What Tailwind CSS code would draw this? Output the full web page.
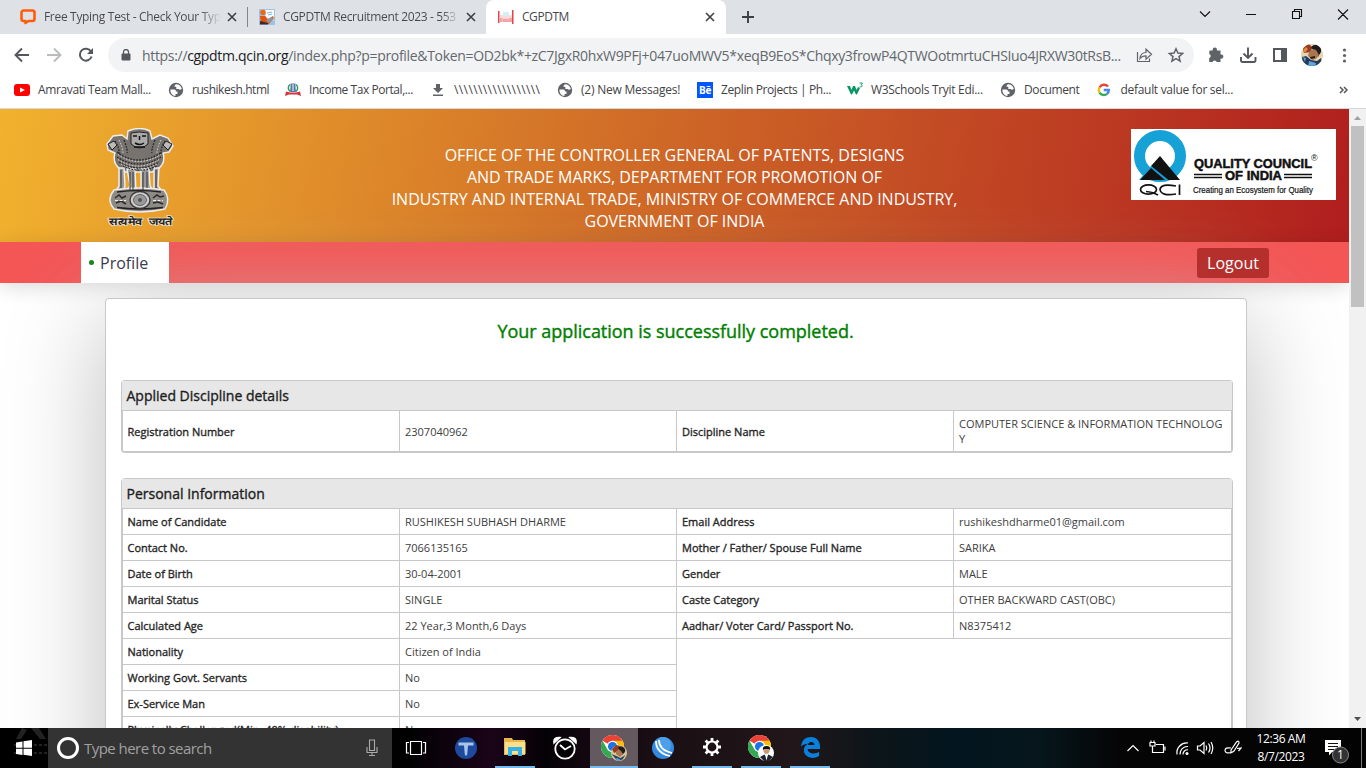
<!DOCTYPE html>
<html lang="en">
<head>
<meta charset="utf-8">
<title>CGPDTM</title>
<script src="https://cdn.jsdelivr.net/npm/@tailwindcss/browser@4"></script>
</head>
<body class="w-[1366px] h-[768px] overflow-hidden bg-white font-['Open_Sans',sans-serif]">
<svg class="hidden">
  <symbol id="x" viewBox="0 0 10 10"><path d="M1 1l8 8M9 1L1 9" stroke="#3c4043" stroke-width="1.6" fill="none"/></symbol>
  <symbol id="globe" viewBox="0 0 16 16"><circle cx="8" cy="8" r="7.200" fill="#5f6368"/><path d="M2.500 7.500h4c1.200 0 1.500 1.300 1.500 2h1.500v2.500H7.500v2C4.500 14 2 11 2.500 7.500zM8 2.200c3 0 5.200 2 5.800 4.600-.8 1.500-2.600 1.200-3.300.2H8.300V4.800H6.500c0-1.300.5-2 1.500-2.600z" fill="#fff"/></symbol>
  <symbol id="chrome" viewBox="0 0 24 24"><circle cx="12" cy="12" r="12" fill="#fff"/><path d="M12 12L1.600 6A12 12 0 0 1 22.400 6z" fill="#ea4335"/><path d="M12 12L22.400 6A12 12 0 0 1 12 24l5.200-9z" fill="#fbbc04"/><path d="M12 12l5.200 3L12 24A12 12 0 0 1 1.600 6l5.200 9z" fill="#34a853"/><path d="M12 6h10.400a12 12 0 0 1 1.200 3H12z" fill="#fbbc04"/><circle cx="12" cy="12" r="6" fill="#fff"/><circle cx="12" cy="12" r="4.700" fill="#1a73e8"/></symbol>
</svg>
<div class="flex flex-col w-full h-full">
  <!-- tab strip -->
  <div class="flex h-[34px] bg-[#dee1e6] text-[12px] leading-[34px] text-[#45484c] shrink-0">
    <div class="flex items-center w-[247px] pl-5">
      <svg class="w-4 h-4 shrink-0" viewBox="0 0 16 16"><path d="M3.500 1.500h9a2 2 0 0 1 2 2v6.500a2 2 0 0 1-2 2H8.500L5.500 14v-2h-2a2 2 0 0 1-2-2V3.500a2 2 0 0 1 2-2z" fill="none" stroke="#ff5c0a" stroke-width="2.600" stroke-linejoin="round"/></svg>
      <div class="ml-2 w-[177px] whitespace-nowrap tracking-[-0.32px] bg-gradient-to-r from-[#45484c] from-88% to-transparent bg-clip-text text-transparent">Free Typing Test - Check Your Typ</div>
      <svg class="w-[10px] h-[10px] ml-[6px]"><use href="#x"/></svg>
    </div>
    <div class="w-px h-5 mt-[7px] bg-[#80868b]"></div>
    <div class="flex items-center w-[238px] pl-[11px]">
      <svg class="w-4 h-4 shrink-0" viewBox="0 0 16 16"><rect width="16" height="16" fill="#9cc3e6"/><path d="M6 1h9v11H7z" fill="#fff"/><path d="M8 4l5-1M9 6l4-1" stroke="#7fb2dc"/><circle cx="4" cy="3.500" r="2.800" fill="#ed6a14"/><path d="M1 7h5l3 3 5-3 1 2-5 6H2z" fill="#e25312"/><path d="M7 11l6-3 2 3-6 3z" fill="#8a98a2"/><path d="M1 12l8 2v1.500H1z" fill="#3b2a22"/></svg>
      <div class="ml-2 w-[173px] whitespace-nowrap tracking-[-0.35px] bg-gradient-to-r from-[#45484c] from-92% to-[#45484c]/20 bg-clip-text text-transparent">CGPDTM Recruitment 2023 - 553</div>
      <svg class="w-[10px] h-[10px] ml-[10px]"><use href="#x"/></svg>
    </div>
    <div class="flex items-center w-[240px] rounded-t-[8px] bg-white pl-3">
      <svg class="w-4 h-4" viewBox="0 0 16 16"><path d="M0 2h1.500v12H0zM14 1h1.500v14H14z" fill="#e2444b"/><path d="M2 6h12v7H2z" fill="#fbdada"/><path d="M5 3h6v4H5z" fill="#d8eef6"/><path d="M1.500 9h3v4h-3zM11 9h3v4h-3zM5 10h6v3H5z" fill="#f4a5a5"/></svg>
      <div class="ml-2 grow tracking-[-0.45px]">CGPDTM</div>
      <svg class="w-[10px] h-[10px] mr-[11px]"><use href="#x"/></svg>
    </div>
    <svg class="w-3 h-3 mt-[11px] ml-4" viewBox="0 0 12 12"><path d="M6 0v12M0 6h12" stroke="#3c4043" stroke-width="1.900"/></svg>
    <svg class="w-[154px] h-[34px] ml-auto mr-4" viewBox="1196 0 154 34"><path d="M1200 11.500l5 5 5-5M1246 14.500h10M1292.500 11.500h7v7h-7zM1294.500 11.500v-2h7v7h-2M1338 9.500l10 10M1348 9.500l-10 10" fill="none" stroke="#111" stroke-width="1.100"/></svg>
  </div>
  <!-- toolbar -->
  <div class="flex items-center h-[42px] bg-white shrink-0">
    <svg class="w-[108px] h-[42px] shrink-0" viewBox="0 34 108 42"><path d="M29 55H16M22 48.500L15.500 55l6.500 6.500" fill="none" stroke="#54575b" stroke-width="1.900"/><path d="M47 55h13M54 48.500l6.500 6.500-6.500 6.500" fill="none" stroke="#b9bbbd" stroke-width="1.900"/><path d="M91 51.500a6 6 0 1 0 .6 5" fill="none" stroke="#54575b" stroke-width="2"/><path d="M93 48v6h-6z" fill="#54575b"/></svg>
    <div class="flex items-center w-[1086px] h-[34px] rounded-full bg-[#f1f3f4]">
      <svg class="w-[10px] h-3 ml-[13px]" viewBox="0 0 10 12"><rect x="0.500" y="4.500" width="9" height="7" rx="1" fill="#54575b"/><path d="M2.500 5V3a2.500 2.500 0 0 1 5 0v2" fill="none" stroke="#54575b" stroke-width="1.300"/></svg>
      <div class="ml-[11px] w-[984px] whitespace-nowrap text-[14px] text-[#64686d] tracking-[-0.32px]">https://<span class="text-[#202124]">cgpdtm.qcin.org</span>/index.php?p=profile&amp;Token=OD2bk*+zC7JgxR0hxW9PFj+047uoMWV5*xeqB9EoS*Chqxy3frowP4QTWOotmrtuCHSIuo4JRXW30tRsB...</div>
      <svg class="w-12 h-5 ml-[10px]" viewBox="1136 45 48 20"><path d="M1137.500 52v9.500h12v-3M1140 58.500c.5-4.500 3-6 6-6v-3.300l5.500 5-5.500 5v-3.400c-2.500 0-4.500.7-6 2.700z" fill="none" stroke="#5f6368" stroke-width="1.200"/><path d="M1176 48.800l1.900 4.300 4.700.4-3.600 3.100 1.100 4.600-4.100-2.500-4.100 2.500 1.100-4.600-3.600-3.100 4.700-.4z" fill="none" stroke="#5f6368" stroke-width="1.500"/></svg>
    </div>
    <svg class="w-[172px] h-[42px]" viewBox="1194 34 172 42">
      <path d="M1209.500 50.500h3.300a2.200 2.200 0 1 1 4 0h3.700v4a2.200 2.200 0 1 1 0 4.200v3.300h-3.800a2.200 2.200 0 0 0-4.200 0h-3.300v-3.900a2.200 2.200 0 0 0 0-4.200z" fill="#5f6368"/>
      <path d="M1241 57v3.500a1.500 1.500 0 0 0 1.500 1.500h11.500a1.500 1.500 0 0 0 1.500-1.500V57M1248 47.500v10M1243.500 53.500l4.500 4.500 4.500-4.500" fill="none" stroke="#54575b" stroke-width="1.900"/>
      <rect x="1274" y="49" width="12" height="12" fill="none" stroke="#54575b" stroke-width="2"/><path d="M1281 49h5v12h-5z" fill="#54575b"/>
      <clipPath id="av"><circle cx="1312" cy="55" r="11"/></clipPath><g clip-path="url(#av)"><path d="M1300 43h24v24h-24z" fill="#e6d6b0"/><path d="M1302 46l6-3 4 4-1 5-7 1z" fill="#963a20"/><path d="M1303 50l3-3 2 2-3 4z" fill="#e08a4a"/><path d="M1311 48q2-4 6-3 5 1 4 7l-3 5-3-6z" fill="#1e1b1e"/><path d="M1309 52q3-4 7-2l3 5-3 4-4 1-4-4z" fill="#a87650"/><path d="M1310 57l5-1v2l-4 1z" fill="#2a1a16"/><path d="M1302 57l4-1 5 4 6 1 4-3 2 9h-20z" fill="#263a58"/><path d="M1303 57l3 1-1 4zM1309 61l7 2-1 4h-7z" fill="#58a7df"/></g>
      <g fill="#5f6368"><circle cx="1344.500" cy="50" r="1.600"/><circle cx="1344.500" cy="55.500" r="1.600"/><circle cx="1344.500" cy="61" r="1.600"/></g>
    </svg>
  </div>
  <!-- bookmarks -->
  <div class="flex items-center h-[33px] pb-[5px] border-b border-[#d6d8da] text-[12px] text-[#3f4246] whitespace-nowrap shrink-0">
    <div class="flex items-center w-[154px] pl-[14px] gap-2 tracking-[-0.37px]"><svg class="w-4 h-3" viewBox="0 0 16 12"><rect width="16" height="12" rx="3" fill="#f00"/><path d="M6 3.500l5 2.500-5 2.500z" fill="#fff"/></svg>Amravati Team Mall...</div>
    <div class="flex items-center w-[117px] pl-[14px] gap-2 tracking-[-0.45px]"><svg class="w-4 h-4"><use href="#globe"/></svg>rushikesh.html</div>
    <div class="flex items-center w-[147px] pl-[14px] gap-2 tracking-[-0.44px]"><svg class="w-4 h-4" viewBox="0 0 16 16"><path d="M5 2.500a4.500 4.500 0 0 0 0 7M11 2.500a4.500 4.500 0 0 1 0 7" fill="none" stroke="#2a9d67" stroke-width="1.500"/><path d="M5.500 1.500h5V5l.5 5H5l.5-5z" fill="#5878a8"/><path d="M8 2v7" stroke="#dfe8f2" stroke-width="1.200"/><path d="M1 9.500l4 1h6l4-1 1 4.500-4-1.500H4L0 14z" fill="#d8323e"/></svg>Income Tax Portal,...</div>
    <div class="flex items-center w-[126px] pl-[13px] gap-2 tracking-[0.4px]"><svg class="w-[14px] h-4 mr-px" viewBox="0 0 14 16"><path d="M5 2h4v4h3l-5 5-5-5h3zM2 12.500h10v1.500H2z" fill="#5f6368"/></svg>\\\\\\\\\\\\\\\\\\</div>
    <div class="flex items-center w-[139px] pl-[13px] gap-2 tracking-[-0.22px]"><svg class="w-4 h-4"><use href="#globe"/></svg>(2) New Messages!</div>
    <div class="flex items-center w-[150px] pl-[14px] gap-2 tracking-[-0.4px]"><div class="w-4 h-4 bg-[#0057ff] text-white text-[10px] leading-[16px] font-bold text-center">Bē</div>Zeplin Projects | Ph...</div>
    <div class="flex items-center w-[153px] pl-[14px] gap-2 tracking-[-0.3px]"><svg class="w-4 h-4" viewBox="0 0 16 16"><path d="M0 4h3l1.500 4L6 4h2l1.500 4L11 5l2 1-3 6.500H9L7 8.500 5 12.500H4z" fill="#059862"/><path d="M12.500 1h3L14 2.800c2 0 1.500 2.700-1.500 2" fill="none" stroke="#059862" stroke-width=".9"/></svg>W3Schools Tryit Edi...</div>
    <div class="flex items-center w-[97px] pl-[14px] gap-2 tracking-[-0.38px]"><svg class="w-4 h-4"><use href="#globe"/></svg>Document</div>
    <div class="flex items-center w-[150px] pl-[14px] gap-[10px] tracking-[-0.3px]"><svg class="w-[14px] h-4" viewBox="0 0 16 16"><g fill="none" stroke-width="2.800"><path d="M13 4A6 6 0 0 0 3 5" stroke="#ea4335"/><path d="M3 5a6 6 0 0 0 0 6" stroke="#fbbc05"/><path d="M3 11a6 6 0 0 0 9 1.500" stroke="#34a853"/><path d="M12 12.500A6 6 0 0 0 14 8H8" stroke="#4285f4"/></g></svg>default value for sel...</div>
    <svg class="w-[9px] h-2 ml-auto mr-[18px]" viewBox="0 0 9 8"><path d="M1 1l3 3-3 3M5 1l3 3-3 3" fill="none" stroke="#54575b" stroke-width="1.500"/></svg>
  </div>
  <!-- web page -->
  <div class="flex h-[619px] shrink-0">
    <div class="w-[1349px] h-full overflow-hidden flex flex-col bg-white">
      <div class="flex justify-between h-[133px] shrink-0 pl-[105px] pr-[13px] bg-[linear-gradient(100deg,#f1b22e_0%,#d06c27_46%,#bf4223_75%,#b01e1e_100%)]">
        <svg class="w-[70px] h-[100px] mt-[19px]" viewBox="0 0 70 100">
          <g stroke="#eee" stroke-width="1.400" fill="#77736f">
            <path d="M23 3q12-5 22 0l2 8 8-4 8 3 5 8-4 6-6 1q3 10-5 16l-6 3H21l-6-3Q7 35 10 25L3 22 2 16l6-8 9-1 5 4z"/>
            <path d="M14 40h5l1 18-2 6h-8l4-6zM22 41h8l1 23h-9l3-7zM36 41h8l1 16 3 7H36zM49 40h5l-1 18 5 6h-9z" fill="#999"/>
            <path d="M9 62q26-4 50 0 7 9 1 19-26 6-51 0-8-9 0-19z" fill="#8e8a86"/>
          </g>
          <g stroke="#2a2a2a" stroke-width="1.300" stroke-dasharray="1.800 1.200" fill="none"><path d="M12 24q21 16 45 0M12 29q21 14 44 0M14 34q20 12 40 0M18 38q16 8 34 0M10 13q5 8 4 14M60 13q-5 8-4 14M19 12q4 10 3 13M50 12q-4 10-3 13"/></g>
          <g stroke="#e4e4e4" stroke-width="1" stroke-dasharray="1.500 1.500" fill="none"><path d="M13 26.500q20 14 43 0M13 31.500q20 13 41 0M16 36q18 10 36 0M14 12q4 8 4 13M56 12q-4 8-4 13"/></g>
          <path d="M26 5q8-2 17 0v11q-8 8-17 0z" fill="#aaa" stroke="#222"/><path d="M28 8h4M37 8h4M30 15q5 3 9 0M34.500 8v4M29 19l11 0" stroke="#111" stroke-width="1.500" fill="none"/>
          <path d="M3 16l6-3 3 4-5 5zM67 16l-6-3-3 4 5 5z" fill="#bbb" stroke="#222"/>
          <path d="M16 42v18M25 44v18M28 44v18M38 44v18M42 44v16M51 42v18" stroke="#333" stroke-width="1"/>
          <path d="M12 64q22-3 44 0M12 79.500q22 3 46 0" stroke="#222" stroke-width="1.500" fill="none"/>
          <ellipse cx="35" cy="72" rx="10" ry="8.500" fill="#ccc" stroke="#333" stroke-width="1.300"/><ellipse cx="35" cy="72" rx="6.500" ry="5.500" fill="#999" stroke="#666"/><circle cx="35" cy="72" r="2" fill="#555"/>
          <path d="M10 70l4-3 3 3 4-2M11 75l5-2 5 3M48 70l4-3 3 2 4-1M48 75l5-1 5 2" stroke="#2a2a2a" stroke-width="1.500" fill="none"/><path d="M10 72.500h11M48 72.500h10" stroke="#eee" stroke-width="1.200" stroke-dasharray="3 1.500"/>
          <g font-size="10" font-weight="600" fill="#222" stroke="#f3e6cf" stroke-width="1.500" paint-order="stroke"><text x="4" y="97" textLength="34" lengthAdjust="spacingAndGlyphs">सत्यमेव</text><text x="44" y="97" textLength="24" lengthAdjust="spacingAndGlyphs">जयते</text></g>
        </svg>
        <div class="relative z-10 w-[640px] ml-[43px] mt-[35px] text-center text-white text-[16px] leading-[22px] tracking-[-0.02px] whitespace-nowrap">OFFICE OF THE CONTROLLER GENERAL OF PATENTS, DESIGNS<br>AND TRADE MARKS, DEPARTMENT FOR PROMOTION OF<br>INDUSTRY AND INTERNAL TRADE, MINISTRY OF COMMERCE AND INDUSTRY,<br>GOVERNMENT OF INDIA</div>
        <svg class="w-[205px] h-[71px] mt-5 bg-white" viewBox="0 0 205 71">
          <circle cx="29" cy="27" r="20.500" fill="none" stroke="#16a2d7" stroke-width="11"/>
          <path d="M8 51l12-14 22 14z" fill="#16a2d7"/><path d="M9 51L20 39l14 12z" fill="#111"/><path d="M20 37l9-10 20 24H37z" fill="#111"/><path d="M20 37.500l17 13.500" stroke="#16a2d7" stroke-width="0.700"/>
          <g fill="none" stroke="#111" stroke-width="1.700"><ellipse cx="17.500" cy="60.500" rx="8" ry="4.700"/><path d="M15 62.500q6 0 12 3.500M45 57q-15-3-16 3.500 1 7 16 4.500M48.500 55.500v10.500"/></g>
          <g fill="#111" font-family="Liberation Sans"><text x="63" y="38.500" font-size="13" font-weight="700" textLength="118" lengthAdjust="spacingAndGlyphs" stroke="#111" stroke-width=".5">QUALITY COUNCIL</text><text x="180" y="32" font-size="9">®</text><text x="94" y="51" font-size="12.500" font-weight="700" textLength="57" lengthAdjust="spacingAndGlyphs" stroke="#111" stroke-width=".5">OF INDIA</text><text x="62" y="64" font-size="9" textLength="120" lengthAdjust="spacingAndGlyphs" stroke="#111" stroke-width=".2">Creating an Ecosystem for Quality</text></g>
          <path d="M63 45.500h28M63 48.500h28M153 45.500h28M153 48.500h28" stroke="#111" stroke-width="1.300"/>
        </svg>
      </div>
      <div class="flex items-start justify-between h-[41px] shrink-0 pl-[81px] pr-20 shadow-[0_4px_20px_rgba(0,0,0,0.14)] bg-[#f45555]">
        <div class="relative z-10 flex items-center w-[88px] h-[41px] bg-white pl-2 text-[16px] text-[#3b3b4b]"><div class="w-[5px] h-[5px] rounded-full bg-[#15861a] mr-[6px]"></div>Profile</div>
        <div class="relative z-10 w-[72px] h-[30px] mt-[6px] rounded-[3px] bg-[#b5302d] text-white text-[16px] leading-[30px] text-center">Logout</div>
      </div>
      <div class="w-[1142px] h-[800px] ml-[105px] mt-[15px] shrink-0 rounded-[4px] border border-[#c8c8c8] bg-white px-[15px] text-[11px] shadow-[0_20px_100px_#bdbdbd]">
        <div class="h-[81px] pt-[19px] text-center text-[18px] leading-[27px] text-[#007f00] [-webkit-text-stroke:0.4px_#007f00] tracking-[-0.02px] pr-px">Your application is successfully completed.</div>
        <div class="w-[1112px] rounded-[4px] border border-b-2 border-[#c8c8c8] mb-[25px]">
          <div class="h-[30px] bg-[#e7e7e7] border-b border-[#c8c8c8] pl-[4.5px] text-[14px] leading-[29px] text-[#1d1d1d] [-webkit-text-stroke:0.35px_#1d1d1d]">Applied Discipline details</div>
          <div class="grid grid-cols-[277px_277px_277px_277px] h-[40px] items-center border-x border-[#c8c8c8] leading-[15px] text-[#3d3d3d] *:h-full *:flex *:items-center *:px-[5px] *:border-r *:border-[#c8c8c8] [&>*:nth-child(odd)]:[-webkit-text-stroke:0.35px_#111] [&>*:nth-child(4n+1)]:pl-[4.5px]">
            <div>Registration Number</div><div>2307040962</div><div>Discipline Name</div><div class="border-r-0! whitespace-nowrap">COMPUTER SCIENCE &amp; INFORMATION TECHNOLOG<br>Y</div>
          </div>
        </div>
        <div class="w-[1112px] rounded-[4px] border border-[#c8c8c8]">
          <div class="h-[30px] bg-[#e7e7e7] border-b border-[#c8c8c8] pl-[4.5px] text-[14px] leading-[29px] text-[#1d1d1d] [-webkit-text-stroke:0.35px_#1d1d1d]">Personal Information</div>
          <div class="grid grid-cols-[277px_277px_277px_277px] auto-rows-[26px] border-x border-[#c8c8c8] leading-[26px] text-[#3d3d3d] *:px-[5px] *:border-r *:border-b *:border-[#c8c8c8] [&>*:nth-child(odd)]:[-webkit-text-stroke:0.35px_#111] [&>*:nth-child(4n)]:border-r-0 [&>*:nth-child(4n+1)]:pl-[4.5px]">
            <div>Name of Candidate</div><div>RUSHIKESH SUBHASH DHARME</div><div>Email Address</div><div>rushikeshdharme01@gmail.com</div>
            <div>Contact No.</div><div>7066135165</div><div>Mother / Father/ Spouse Full Name</div><div>SARIKA</div>
            <div>Date of Birth</div><div>30-04-2001</div><div>Gender</div><div>MALE</div>
            <div>Marital Status</div><div>SINGLE</div><div>Caste Category</div><div>OTHER BACKWARD CAST(OBC)</div>
            <div>Calculated Age</div><div>22 Year,3 Month,6 Days</div><div>Aadhar/ Voter Card/ Passport No.</div><div>N8375412</div>
          </div>
          <div class="grid grid-cols-[277px_277px] auto-rows-[26px] border-x border-[#c8c8c8] leading-[26px] text-[#3d3d3d] *:px-[5px] *:border-r *:border-b *:border-[#c8c8c8] [&>*:nth-child(odd)]:[-webkit-text-stroke:0.35px_#111] [&>*:nth-child(odd)]:pl-[4.5px]">
            <div>Nationality</div><div>Citizen of India</div>
            <div>Working Govt. Servants</div><div>No</div>
            <div>Ex-Service Man</div><div>No</div>
            <div>Physically Challenged(Min. 40% disability)</div><div>No</div>
          </div>
        </div>
      </div>
    </div>
    <div class="w-[17px] h-full bg-[#f1f1f1] flex flex-col items-center">
      <svg class="w-[17px] h-[17px]" viewBox="0 0 17 17"><path d="M5 11l3.500-4 3.500 4z" fill="#a0a0a0"/></svg>
      <div class="w-[13px] h-[181px] bg-[#c1c1c1]"></div>
      <svg class="w-[17px] h-[17px] mt-auto" viewBox="0 0 17 17"><path d="M5 6l3.500 4L12 6z" fill="#505050"/></svg>
    </div>
  </div>
  <!-- taskbar -->
  <div class="flex h-10 shrink-0 bg-[linear-gradient(90deg,#000_0%,#020102_30%,#1a0419_36%,#050205_40%,#120711_43%,#1a1014_49%,#21171b_58%,#0c1519_64%,#03151e_70%,#06161c_76%,#050505_82%,#030303_100%)] text-white">
    <svg class="w-12 h-10" viewBox="0 0 48 40"><path d="M22 0L16 11h5l6-9zM31 0h8l7 11h-6z" fill="#222"/><path d="M14 17h34M14 25h34" stroke="#222" stroke-width="2" stroke-dasharray="3 2"/><path d="M16 14.500l6.500-1v6.200H16zM23.500 13.300L32 12v7.700h-8.500zM16 20.700h6.500v6.200l-6.500-1zM23.500 20.700H32V28l-8.500-1.200z" fill="#fff"/></svg>
    <div class="flex items-center w-[344px] bg-[#333] pl-[9px] text-[15px] text-[#a0a0a0]">
      <div class="w-[22px] h-[22px] rounded-full border-[3px] border-white mr-[5px]"></div><span class="tracking-[-0.55px]">Type here to search</span>
      <svg class="w-3 h-[18px] ml-auto mr-[14px]" viewBox="0 0 12 18"><path d="M3.500 1h5v10.500h-5zM1 8v5.500h10V8M6 13.500v3M3 16.500h6" fill="none" stroke="#aaa" stroke-width="1.100"/></svg>
    </div>
    <svg class="w-[50px] h-10" viewBox="392 0 50 40"><path d="M410.500 13.500h11v13h-11zM409 14.500h-2.500v10.500h2.500M423 14.500h2.500v10.500H423" fill="none" stroke="#fff" stroke-width="1.200"/></svg>
    <div class="flex w-12 justify-center items-center"><svg class="w-[22px] h-[22px]" viewBox="0 0 22 22"><circle cx="11" cy="11" r="11" fill="#1d4a9e"/><path d="M3.500 5.500h15v3H13l-.8 9L11 19l-1.200-1.500-.8-9H3.500z" fill="#a8c5e8"/></svg></div>
    <div class="flex w-[50px] justify-center items-center"><div class="flex w-10 h-10 justify-center items-center border-b-2 border-[#76b9ed]"><svg class="w-[22px] h-[20px]" viewBox="0 0 22 20"><path d="M0 1h8l1 2h12v15H0z" fill="#e8b64c"/><path d="M1 5h20.500v12H1z" fill="#fbdf89"/><path d="M4 10h14v9h-4v-5H8v5H4z" fill="#35b1e8"/></svg></div></div>
    <div class="flex w-[50px] justify-center items-center"><svg class="w-6 h-6" viewBox="0 0 24 24"><circle cx="12" cy="13" r="9.700" fill="#050205" stroke="#fff" stroke-width="1.800"/><path d="M1 7Q0 1 7 1.500zM23 7q1-6-6-5.500z" fill="#fff" stroke="#fff" stroke-width="1.500"/><path d="M7 9l5 4.500L18 10" fill="none" stroke="#fff" stroke-width="1.800"/></svg></div>
    <div class="flex w-12 justify-center items-center bg-[#655960] border-b-2 border-[#76b9ed]"><svg class="w-[26px] h-[26px] mt-[2px]" viewBox="0 0 26 26"><use href="#chrome" width="23" height="23"/><circle cx="18" cy="18" r="8" fill="#dcc59a"/><path d="M11 14l4-4 4 1-2 5-4 2z" fill="#963a20"/><path d="M17 13q2-3 5-1 3 2 2 5l-3 3-2-4z" fill="#211b1b"/><path d="M15 16q3-2 5 0l2 3-3 3-4-3z" fill="#a87650"/><path d="M10.500 19l5 2 4 2 5-3-3 4.500-5 1.500z" fill="#284764"/><path d="M15 23l4 1-1 2h-2z" fill="#58a7df"/></svg></div>
    <div class="flex w-[50px] justify-center items-center"><svg class="w-[22px] h-[22px]" viewBox="0 0 22 22"><circle cx="11" cy="11" r="11" fill="#3489df"/><circle cx="11" cy="8" r="8" fill="#4e9fe9"/><path d="M4 4q0 12 14 15M7 3q0 10 13 13" fill="none" stroke="#fff" stroke-width="1.700"/></svg></div>
    <div class="flex w-12 justify-center"><div class="flex w-10 h-10 justify-center items-center border-b-2 border-[#76b9ed]"><svg class="w-5 h-5" viewBox="0 0 20 20"><circle cx="10" cy="10" r="5.500" fill="none" stroke="#fff" stroke-width="2.200"/><path d="M10 1v3.500M10 15.500V19M1 10h3.500M15.500 10H19M3.600 3.600l2.500 2.500M13.900 13.900l2.500 2.500M3.600 16.400l2.500-2.500M13.900 6.100l2.500-2.500" stroke="#fff" stroke-width="2.800"/></svg></div></div>
    <div class="flex w-[50px] justify-center"><div class="flex w-10 h-10 justify-center items-center border-b-2 border-[#76b9ed]"><svg class="w-[26px] h-[26px] mt-[2px]" viewBox="0 0 26 26"><use href="#chrome" width="23" height="23"/><circle cx="18" cy="18" r="8" fill="#fff"/><path d="M15 15q-1-4 3.500-4t3.500 4z" fill="#111"/><path d="M15.500 14h6v3q-3 4-6 0z" fill="#c69a7b"/><path d="M12 22l4.500-2.500 2 2 2-2L25 22l-4 4h-5z" fill="#1b2430"/><path d="M17 19.500h3l-1.500 6z" fill="#fff"/></svg></div></div>
    <div class="flex w-12 justify-center"><div class="flex w-10 h-10 justify-center items-center border-b-2 border-[#76b9ed]"><svg class="w-[21px] h-[21px]" viewBox="0 0 22 22"><path d="M1 10C2 3 6 0 11.500 0 18 0 21 5 21 10v2.500H8c.2 5 7.500 6 12 3V20c-6 4-16 1.500-16-6 0-3 1.500-5.500 4.500-7C5.500 7 3 8 1 10zM8.200 8.500h7C15.200 4 8.500 4 8.200 8.500z" fill="#0a80dc"/></svg></div></div>
    <svg class="w-[118px] h-10 ml-auto" viewBox="1124 0 118 40"><g fill="none" stroke="#fff" stroke-width="1.200"><path d="M1127.500 23l5.500-5.500 5.500 5.500M1156 16.500h7.500v8h-9M1165 18.500v4M1150 14.500v3.500h5v-3.500zM1151 12.500v2M1154 12.500v2M1152.500 18v6.500h2"/><path d="M1177 26.500a10 10 0 0 1 11-11.500M1180 26.500a7.500 7.500 0 0 1 8-8M1183 26.500a4.500 4.500 0 0 1 5-4.700"/><path d="M1197.500 18h2.500l4-3.500v11l-4-3.500h-2.500zM1206 17.500q1.500 2.500 0 5M1208.500 15.500q3 4.500 0 9M1211 14q3.500 6 0 12"/><path d="M1231 22l5.500-8q2.500-2 2.500 1l-5 8-3 2zM1231 20q-6-1-6 2.500t7 2M1237 20.500l4-.5-2.500 3"/></g><circle cx="1187" cy="25.500" r="1.500" fill="#fff"/></svg>
    <div class="w-[78px] pt-[2px] text-center text-[12px] leading-[18px] tracking-[-0.4px]">12:36 AM<br>8/7/2023</div>
    <svg class="w-[46px] h-10" viewBox="1320 0 46 40"><path d="M1325 12h16v12h-9l-3 3.500V24h-4z" fill="#fff"/><path d="M1328 15.500h10M1328 18.500h10M1328 21.500h6" stroke="#111" stroke-width="1.100"/><circle cx="1340.500" cy="27" r="8" fill="#333" stroke="#888"/><text x="1340.500" y="31" text-anchor="middle" font-size="12" fill="#fff">1</text><path d="M1361.500 0v40" stroke="#777"/></svg>
  </div>
</div>
</body>
</html>
